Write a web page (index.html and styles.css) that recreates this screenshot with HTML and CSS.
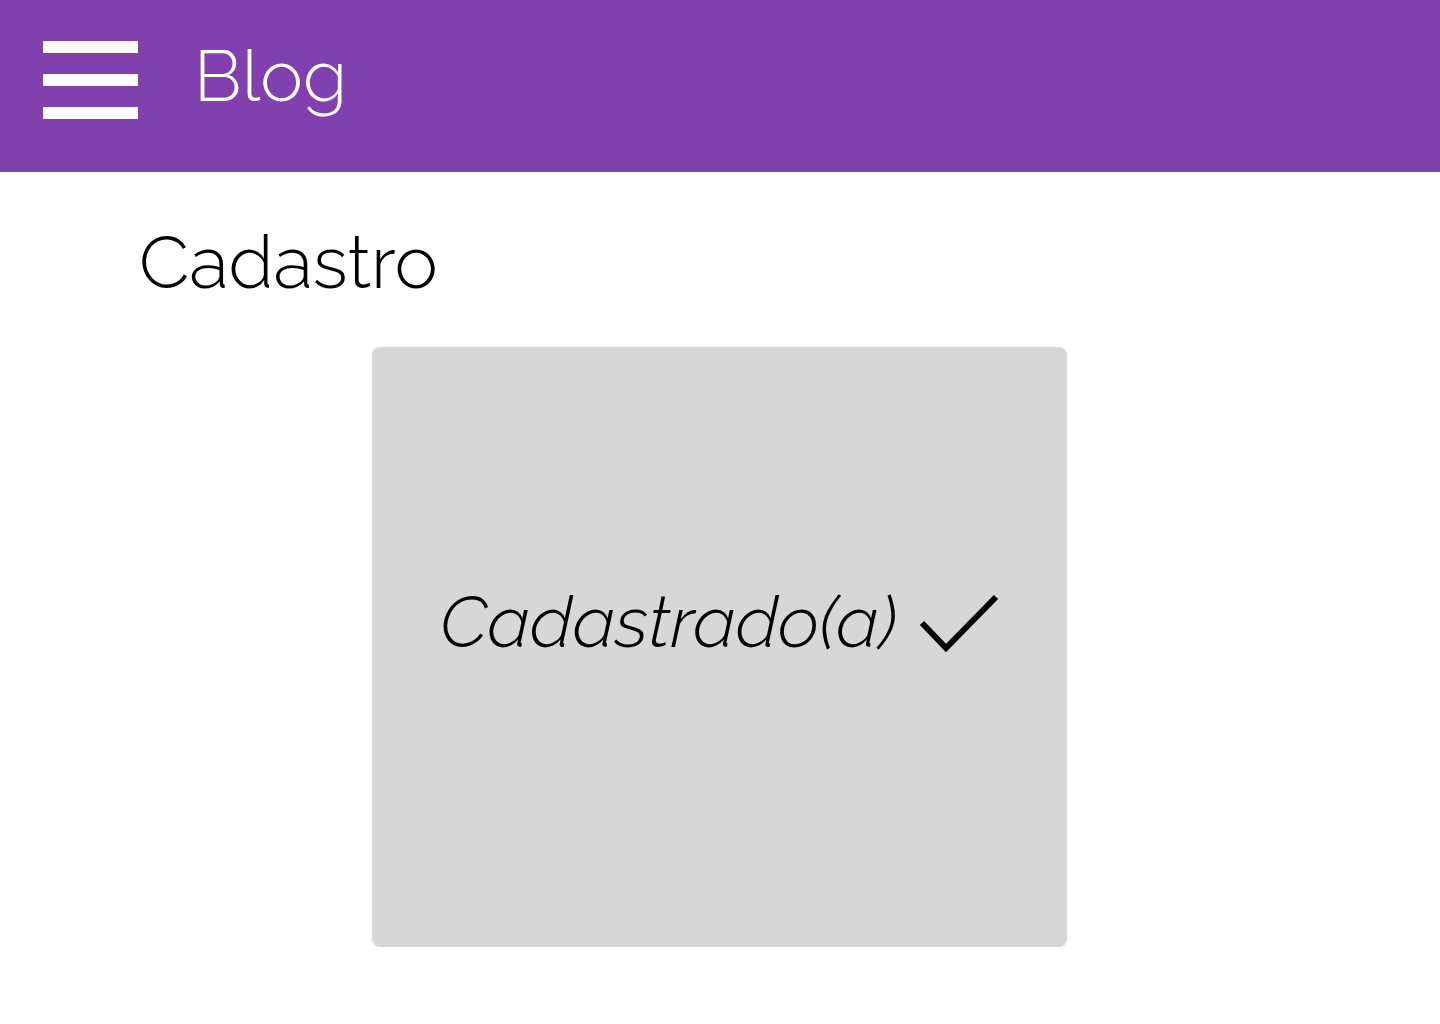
FILE: index.html
```html
<!DOCTYPE html>
<html lang="pt">
<head>
<meta charset="utf-8">
<title>Blog - Cadastro</title>
<link rel="stylesheet" href="styles.css">
</head>
<body>
<header class="topbar">
  <div class="menu" aria-label="Menu">
    <span class="bar"></span>
    <span class="bar"></span>
    <span class="bar"></span>
  </div>
  <div class="brand">Blog</div>
</header>
<main class="content">
  <h1 class="page-title">Cadastro</h1>
  <section class="card">
    <div class="status">
      <span class="status-text">Cadastrado(a)</span>
      <svg class="check" width="80" height="60" viewBox="0 0 80 60" aria-hidden="true">
        <polyline points="3,29 27,54 77,3" fill="none" stroke="#000" stroke-width="6"/>
      </svg>
    </div>
  </section>
</main>
</body>
</html>
```

FILE: styles.css
```css
* { box-sizing: border-box; }
html, body { margin: 0; padding: 0; background: #fff; }
body {
  font-family: "Raleway", "Lato", "Noto Sans", sans-serif;
  font-weight: 300;
  color: #000;
}
.topbar {
  height: 172px;
  background: #8041ae;
  display: flex;
  align-items: center;
  padding-left: 43px;
  padding-bottom: 12px;
}
.menu {
  display: flex;
  flex-direction: column;
  gap: 21px;
  width: 95px;
}
.bar {
  display: block;
  height: 12px;
  background: #fff;
}
.brand {
  margin-left: 56px;
  color: #fff;
  font-size: 72px;
  line-height: 1;
  padding-bottom: 8px;
}
.content {
  padding-top: 50px;
}
.page-title {
  margin: 0 0 0 139px;
  font-size: 73px;
  font-weight: 300;
  line-height: 80px;
}
.card {
  width: 695px;
  height: 600px;
  margin: 45px 0 0 372px;
  background: #d7d7d7;
  border-radius: 8px;
  display: flex;
  align-items: center;
  justify-content: center;
  padding-bottom: 50px;
}
.status {
  display: flex;
  align-items: center;
  gap: 22px;
}
.status-text {
  font-style: italic;
  font-size: 72px;
  line-height: 1;
}
.check { display: block; margin-top: 4px; }
```
